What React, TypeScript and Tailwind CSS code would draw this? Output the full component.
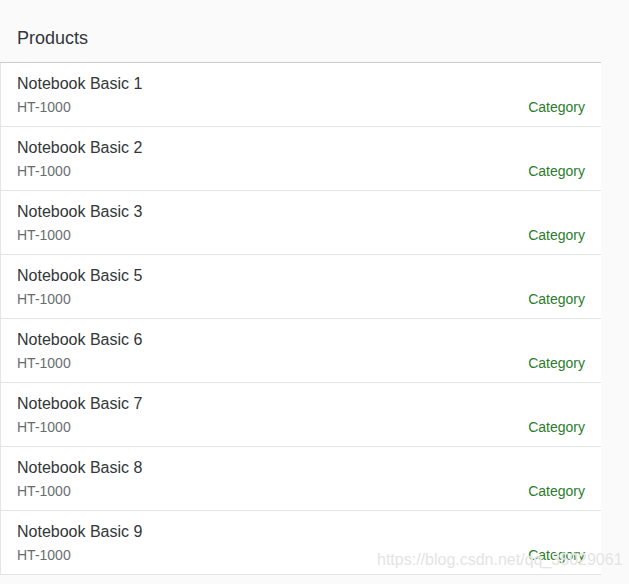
import React from 'react';

const products = [1, 2, 3, 5, 6, 7, 8, 9].map((n) => ({
  name: `Notebook Basic ${n}`,
  id: 'HT-1000',
  category: 'Category',
}));

export default function App() {
  return (
    <div className="relative min-h-[584px] w-full bg-[#fafafa] font-['Liberation_Sans',Arial,sans-serif]">
      <div className="w-[601px]">
        {/* Header */}
        <div className="h-[63px] border-b border-[#cccccc] bg-[#fafafa] px-[17px] pt-[26px]">
          <h1 className="text-[18px] leading-[24px] text-[#32363a]">Products</h1>
        </div>

        {/* List */}
        <ul className="border-l border-[#e5e5e5] bg-white">
          {products.map((p, i) => (
            <li key={i} className="flex h-[64px] flex-col border-b border-[#e5e5e5] pl-[16px] pr-[16px] pt-[11px]">
              <span className="text-[16px] leading-[20px] text-[#32363a]">{p.name}</span>
              <div className="mt-[4px] flex items-center justify-between text-[14px] leading-[18px]">
                <span className="text-[#6a6d70]">{p.id}</span>
                <span className="text-[#2b7d2b]">{p.category}</span>
              </div>
            </li>
          ))}
        </ul>
      </div>

      {/* watermark */}
      <span className="pointer-events-none absolute left-[377px] top-[550px] whitespace-nowrap text-[16px] leading-[20px] text-[#e4e4e4] [text-shadow:0_0_1px_#fff]">
        https://blog.csdn.net/qq_35029061
      </span>
    </div>
  );
}
